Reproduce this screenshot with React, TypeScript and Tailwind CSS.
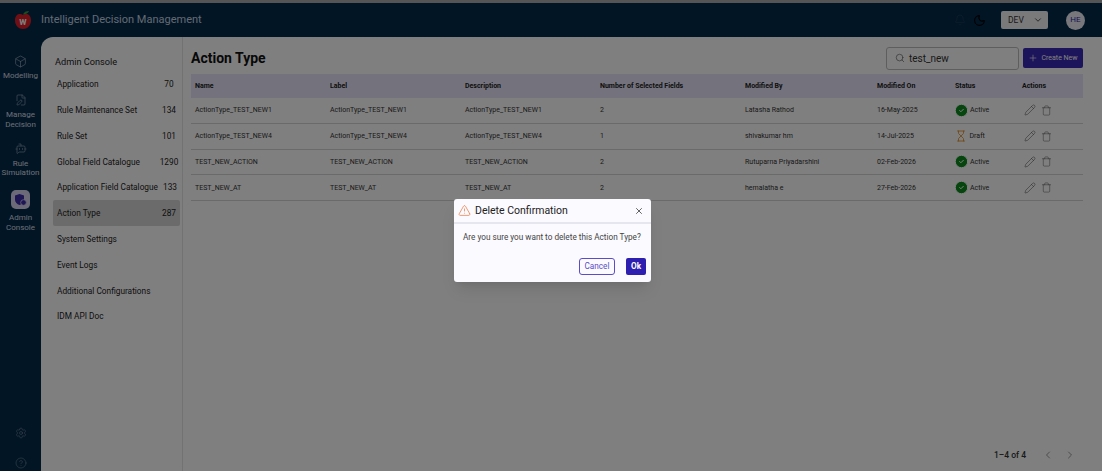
import { Bell, Box, CheckCircle2, ChevronDown, ChevronLeft, ChevronRight, CircleHelp, FilePen, Hourglass, Moon, Pencil, Plus, Search, Settings, Trash, TriangleAlert, X, BotMessageSquare } from "lucide-react"

const menu = [
  { label: "Application", count: "70" },
  { label: "Rule Maintenance Set", count: "134" },
  { label: "Rule Set", count: "101" },
  { label: "Global Field Catalogue", count: "1290" },
  { label: "Application Field Catalogue", count: "133" },
  { label: "Action Type", count: "287", active: true },
  { label: "System Settings" },
  { label: "Event Logs" },
  { label: "Additional Configurations" },
  { label: "IDM API Doc" },
]

const rows = [
  { name: "ActionType_TEST_NEW1", fields: "2", by: "Latasha Rathod", on: "16-May-2025", status: "Active" },
  { name: "ActionType_TEST_NEW4", fields: "1", by: "shivakumar hm", on: "14-Jul-2025", status: "Draft" },
  { name: "TEST_NEW_ACTION", fields: "2", by: "Rutuparna Priyadarshini", on: "02-Feb-2026", status: "Active" },
  { name: "TEST_NEW_AT", fields: "2", by: "hemalatha e", on: "27-Feb-2026", status: "Active" },
]

const cols = "grid grid-cols-[135px_135px_135px_145px_132px_78px_67px_1fr] items-center px-1"

function Logo() {
  return (
    <svg width="18" height="20" viewBox="0 0 18 20" className="shrink-0">
      <path d="M9 5C6 3 1 4 1 10.500c0 5 4 8.500 8 8.500s8-3.500 8-8.500C17 4 12 3 9 5z" fill="#e0202a" />
      <path d="M9 4.500c1-2.500 3-3.500 6-3.500-1 2-3 3.500-6 3.500z" fill="#3a9a3a" />
      <text x="9" y="14.500" textAnchor="middle" fontSize="10" fontWeight="700" fill="#fff" fontFamily="Roboto, sans-serif">w</text>
    </svg>
  )
}

function AdminIcon() {
  return (
    <svg width="13" height="13" viewBox="0 0 13 13">
      <path d="M5.500 1 L10 2.500 V6.500 C10 9.500 8 11.200 5.500 12 C3 11.200 1 9.500 1 6.500 V2.500 Z" fill="#3a2aa8" />
      <circle cx="9.500" cy="9.500" r="2.800" fill="#3a2aa8" stroke="#d8d4f0" strokeWidth="0.8" />
    </svg>
  )
}

function SideItem({ icon, lines, active }: { icon: React.ReactNode; lines: string[]; active?: boolean }) {
  return (
    <div className="flex flex-col items-center text-[8px] leading-[9.5px] text-[#d8dfe6]">
      <div className={active ? "mb-[4px] flex size-[19px] items-center justify-center rounded-[5px] bg-[#d8d4f0]" : "mb-[1px] flex size-[18px] items-center justify-center"}>
        {icon}
      </div>
      {lines.map((l) => (
        <span key={l}>{l}</span>
      ))}
    </div>
  )
}

export default function App() {
  return (
    <div className="relative flex h-screen flex-col overflow-hidden bg-[#052b4b] font-['Roboto',sans-serif]">
      <div className="h-[3px] shrink-0 bg-[#aaaaaa]" />

      {/* Top bar */}
      <header className="flex h-[34px] shrink-0 items-center pl-[14px] pr-[17px]">
        <Logo />
        <span className="ml-[9px] text-[11px] text-[#c4d3e2]">Intelligent Decision Management</span>
        <div className="ml-auto flex items-center">
          <Bell size={12} strokeWidth={1.5} className="text-[#1c3a54]" />
          <Moon size={13} strokeWidth={2} className="ml-[7px] text-black" />
          <div className="ml-[15px] flex h-[18px] w-[47px] items-center justify-between rounded-[2px] bg-[#f5f5f5] pl-[7px] pr-[5px] text-[8.5px] text-[#333]">
            DEV
            <ChevronDown size={10} />
          </div>
          <div className="ml-[18px] flex size-[19px] items-center justify-center rounded-full bg-[#f0eff8] text-[8px] text-[#2a1fa8]">HE</div>
        </div>
      </header>

      <div className="flex min-h-0 flex-1">
        {/* Icon rail */}
        <aside className="flex w-[41px] shrink-0 flex-col items-center pt-[15px]">
          <SideItem icon={<Box size={13} strokeWidth={1.2} className="text-[#9fb0c0]" />} lines={["Modelling"]} />
          <div className="h-[10.5px]" />
          <SideItem icon={<FilePen size={12} strokeWidth={1.2} className="text-[#9fb0c0]" />} lines={["Manage", "Decision"]} />
          <div className="h-[10.5px]" />
          <SideItem icon={<BotMessageSquare size={12} strokeWidth={1.2} className="text-[#9fb0c0]" />} lines={["Rule", "Simulation"]} />
          <div className="h-[12.5px]" />
          <SideItem active icon={<AdminIcon />} lines={["Admin", "Console"]} />
          <div className="mt-auto flex flex-col items-center gap-[18px] pb-[2px]">
            <Settings size={12} strokeWidth={1.2} className="text-[#6f8395]" />
            <CircleHelp size={12} strokeWidth={1.2} className="text-[#6f8395]" />
          </div>
        </aside>

        {/* Content */}
        <main className="flex min-w-0 flex-1 overflow-hidden rounded-tl-[12px] bg-white">
          <nav className="w-[142px] shrink-0 border-r border-[#e4e4e4] pl-[12px] pr-[2px] pt-[18px]">
            <div className="pl-[2px] text-[9.2px] leading-[13px] text-[#222]">Admin Console</div>
            <ul className="mt-[3.500px]">
              {menu.map((m) => (
                <li
                  key={m.label}
                  className={m.active
                    ? "flex h-[25.8px] items-center rounded-[2px] bg-[#d6d6d6] pl-[4px] text-[8.3px] text-[#222]"
                    : "flex h-[25.8px] items-center pl-[4px] text-[8.3px] text-[#222]"}
                >
                  <span className="whitespace-nowrap">{m.label}</span>
                  {m.count && <span className="ml-auto mr-[-1px] w-[24px] shrink-0 text-center">{m.count}</span>}
                </li>
              ))}
            </ul>
          </nav>

          <section className="flex min-w-0 flex-1 flex-col pl-[8px] pr-[19px]">
            <div className="flex h-[37px] shrink-0 items-center pt-[5px]">
              <h1 className="text-[14px] font-bold text-[#111]">Action Type</h1>
              <div className="ml-auto flex h-[23px] w-[133px] items-center rounded-[3px] border border-[#bdbdbd] pl-[8px] text-[10px] text-[#333]">
                <Search size={10} strokeWidth={1.5} className="text-[#555]" />
                <span className="ml-[4px]">test_new</span>
              </div>
              <div className="ml-[4px] flex h-[20px] w-[60px] items-center justify-center gap-[3px] rounded-[2px] bg-[#3a2ab8] text-[7px] text-white">
                <Plus size={10} strokeWidth={1.5} />
                Create New
              </div>
            </div>

            <div className={`${cols} h-[24px] shrink-0 bg-[#e8e6fa] text-[7px] font-bold text-[#222]`}>
              <span>Name</span>
              <span>Label</span>
              <span>Description</span>
              <span>Number of Selected Fields</span>
              <span>Modified By</span>
              <span>Modified On</span>
              <span>Status</span>
              <span>Actions</span>
            </div>
            {rows.map((r) => (
              <div key={r.name} className={`${cols} h-[25.8px] shrink-0 border-b border-[#d4d4d4] text-[7px] text-[#333]`}>
                <span>{r.name}</span>
                <span>{r.name}</span>
                <span>{r.name}</span>
                <span>{r.fields}</span>
                <span>{r.by}</span>
                <span>{r.on}</span>
                <span className="flex items-center gap-[1.500px]">
                  {r.status === "Active"
                    ? <CheckCircle2 size={15} strokeWidth={1.6} fill="#0f8a1f" className="-ml-[1.500px] text-white" />
                    : <Hourglass size={12} strokeWidth={1.6} className="mr-[1px] text-[#e08a1a]" />}
                  {r.status}
                </span>
                <span className="flex items-center gap-[5px] pl-[2px] text-[#444]">
                  <Pencil size={12} strokeWidth={1} />
                  <Trash size={11} strokeWidth={1} />
                </span>
              </div>
            ))}

            <div className="mt-auto flex h-[32px] shrink-0 items-center justify-end pr-[7px] text-[8.5px] font-medium text-[#333]">
              <span>1–4 of 4</span>
              <ChevronLeft size={12} className="ml-[16px] text-[#999]" />
              <ChevronRight size={12} className="ml-[10px] text-[#999]" />
            </div>
          </section>
        </main>
      </div>

      {/* Modal */}
      <div className="absolute inset-0 bg-black/50 pl-[454px] pt-[199px]">
        <div className="flex h-[83px] w-[197px] flex-col rounded-[3px] bg-[#fbfaff] shadow-lg">
          <div className="flex h-[25px] shrink-0 items-center border-b-2 border-[#e6e6ee] pl-[3.500px] pr-[7.500px]">
            <TriangleAlert size={13} strokeWidth={1.3} className="text-[#e8743b]" />
            <span className="ml-[4.500px] text-[10.5px] text-[#222]">Delete Confirmation</span>
            <X size={10} className="ml-auto text-[#444]" />
          </div>
          <p className="mt-[7.500px] whitespace-nowrap px-[9px] text-[8.2px] leading-[11px] text-[#444]">Are you sure you want to delete this Action Type?</p>
          <div className="mt-auto flex items-center justify-end gap-[11px] pb-[7px] pr-[5px]">
            <button className="flex h-[17px] w-[36px] items-center justify-center rounded-[3px] border border-[#5a4dc8] text-[8.2px] text-[#5a4dc8]">Cancel</button>
            <button className="flex h-[17px] w-[20px] items-center justify-center rounded-[2px] bg-[#2f1fb0] text-[8.2px] font-bold text-white">Ok</button>
          </div>
        </div>
      </div>
    </div>
  )
}
